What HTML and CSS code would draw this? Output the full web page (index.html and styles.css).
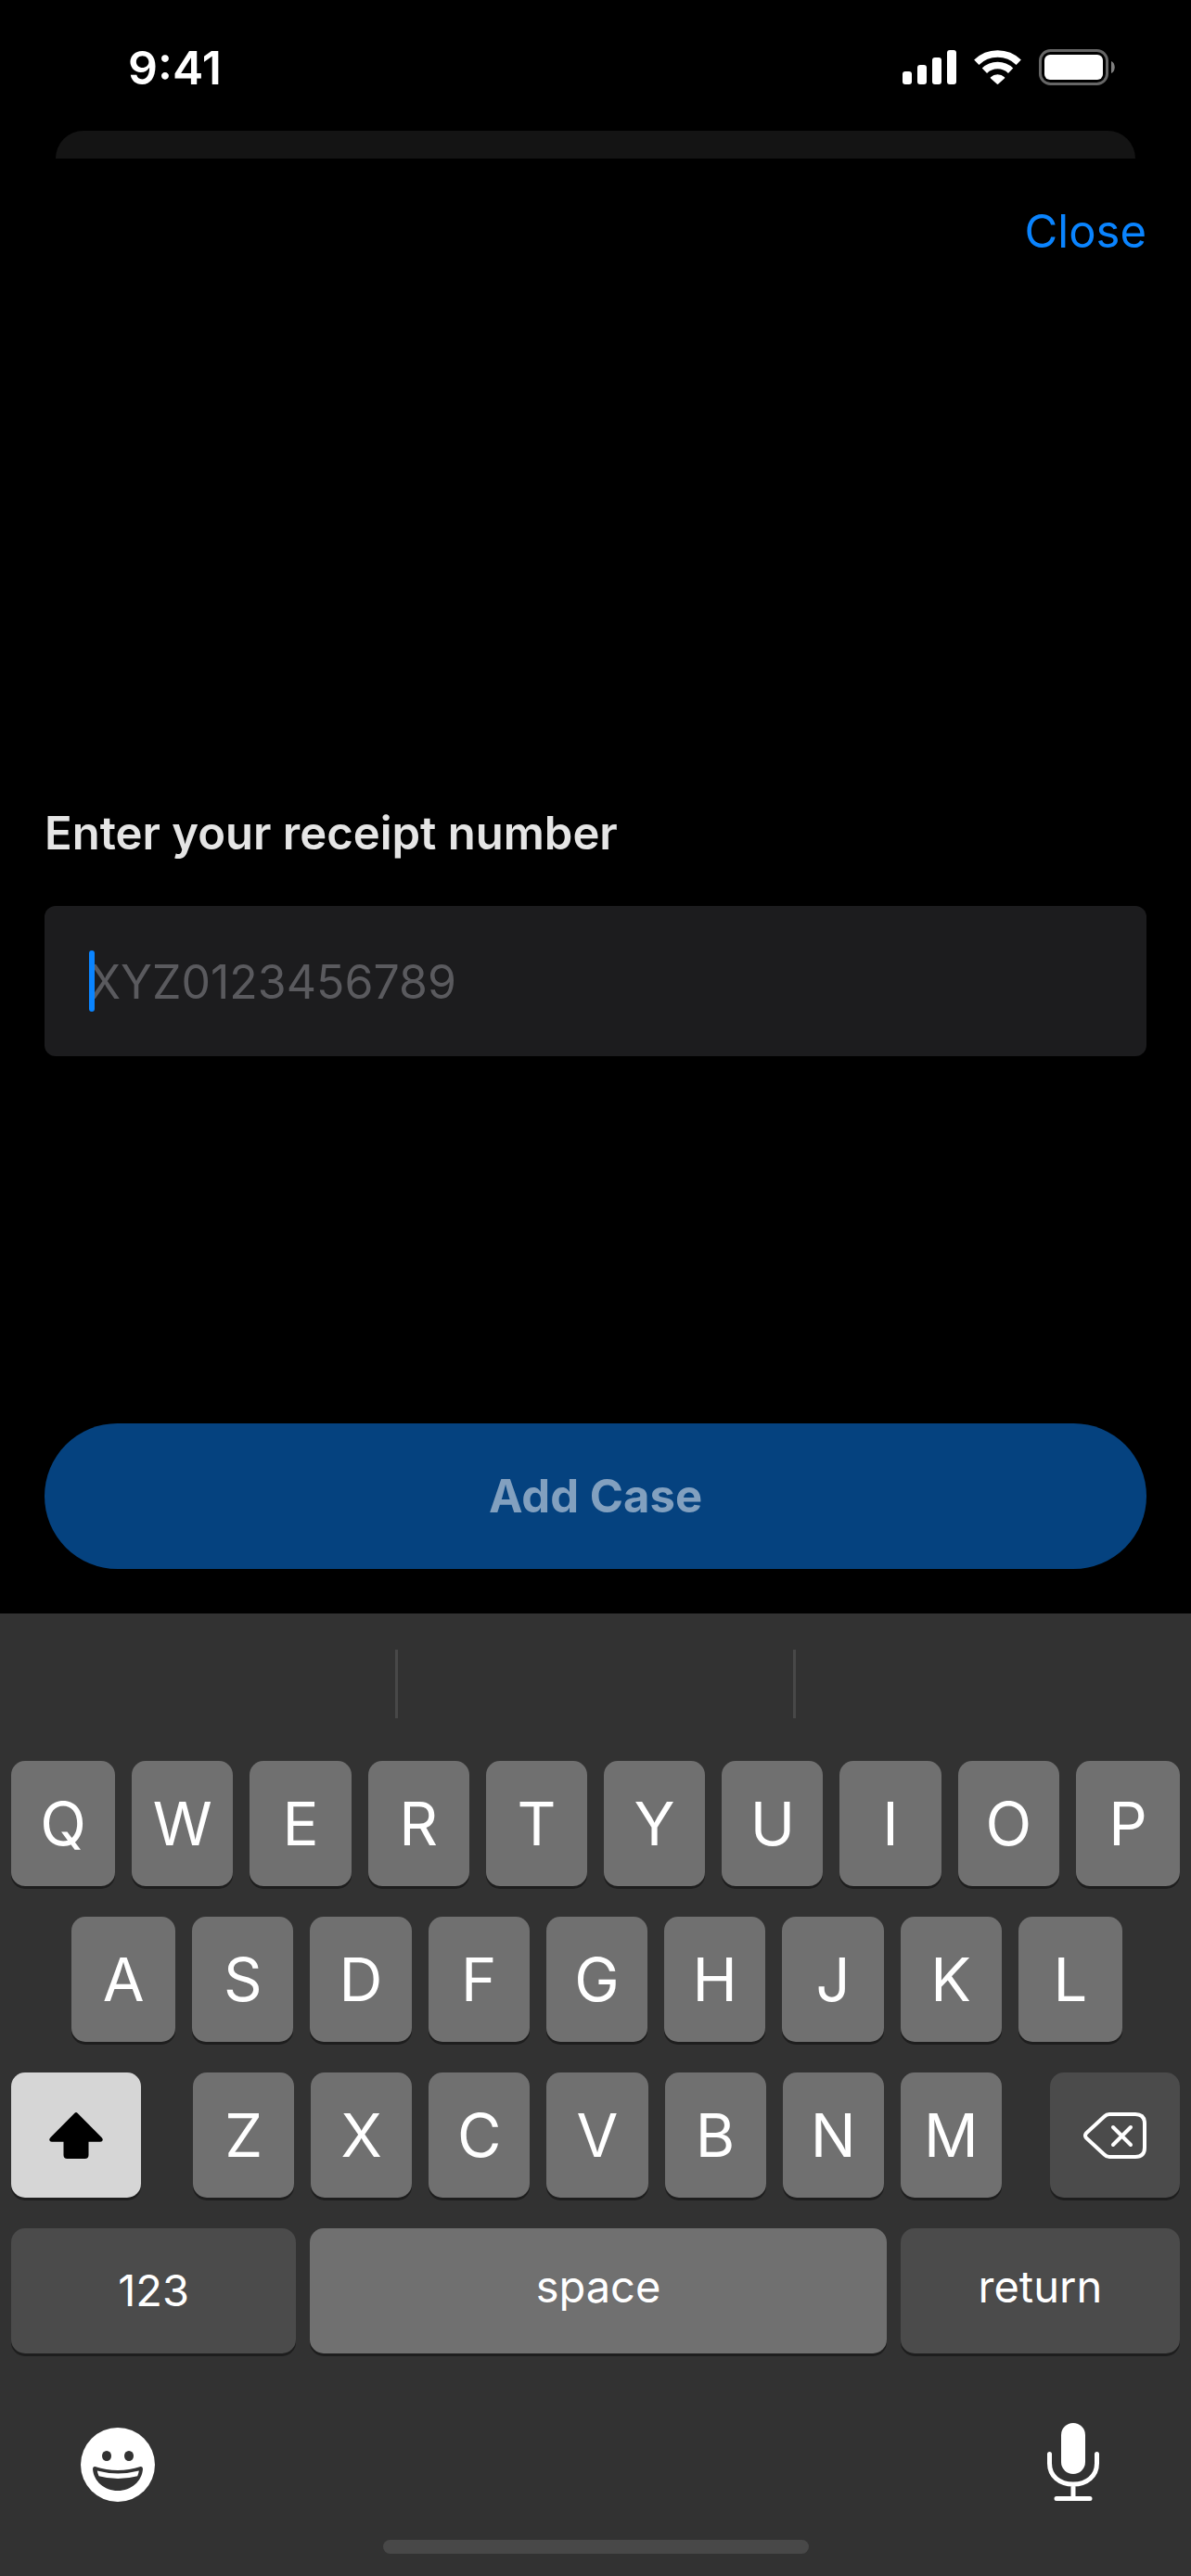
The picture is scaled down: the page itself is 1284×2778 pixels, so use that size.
FILE: index.html
```html
<!DOCTYPE html>
<html lang="en">
<head>
<meta charset="utf-8">
<meta name="viewport" content="width=device-width, initial-scale=1">
<title>Add Case</title>
<link rel="stylesheet" href="styles.css">
</head>
<body>
<header class="status-bar">
  <time class="status-time">9:41</time>
  <div class="status-icons">
    <svg class="signal" width="58" height="37" viewBox="0 0 58 37" fill="#fff" role="img" aria-label="Signal">
      <rect x="0" y="23" width="10" height="14" rx="3"/>
      <rect x="16" y="16" width="10" height="21" rx="3"/>
      <rect x="32" y="8" width="10" height="29" rx="3"/>
      <rect x="48" y="0" width="10" height="37" rx="3"/>
    </svg>
    <svg class="wifi" width="51" height="37" viewBox="0 0 51 37" role="img" aria-label="Wi-Fi">
      <g fill="none" stroke="#fff" stroke-width="7.6">
        <path d="M2.8 13.2a32.6 32.6 0 0 1 45.4 0"/>
        <path d="M11.4 22.2a20.3 20.3 0 0 1 28.2 0"/>
      </g>
      <path d="M18 29.2a11 11 0 0 1 15 0q.5.6 0 1.200l-6.700 6.200q-.8.7-1.600 0L18 30.400q-.5-.6 0-1.200z" fill="#fff"/>
    </svg>
    <svg class="battery" width="82" height="39" viewBox="0 0 82 39" role="img" aria-label="Battery">
      <rect x="1.500" y="1.500" width="72" height="36" rx="11" fill="none" stroke="#666" stroke-width="3"/>
      <rect x="6" y="6" width="63" height="27" rx="6" fill="#fff"/>
      <path d="M78 13c5 2 5 11 0 13z" fill="#808080"/>
    </svg>
  </div>
</header>
<div class="back-card"></div>
<main class="sheet">
  <nav class="sheet-nav"><button class="close" type="button">Close</button></nav>
  <form class="case-form">
    <label class="field-label" for="receipt">Enter your receipt number</label>
    <div class="field">
      <input class="field-input" id="receipt" type="text" placeholder="XYZ0123456789">
      <span class="caret"></span>
    </div>
    <button class="submit" type="submit" disabled>Add Case</button>
  </form>
</main>
<section class="keyboard" aria-label="Keyboard">
  <div class="suggestions"><span></span><span></span><span></span></div>
  <div class="rows">
    <div class="row">
      <button class="key edge">Q</button><button class="key">W</button><button class="key">E</button><button class="key">R</button><button class="key">T</button><button class="key">Y</button><button class="key">U</button><button class="key">I</button><button class="key">O</button><button class="key edge">P</button>
    </div>
    <div class="row home-row">
      <button class="key edge">A</button><button class="key">S</button><button class="key">D</button><button class="key">F</button><button class="key">G</button><button class="key">H</button><button class="key">J</button><button class="key">K</button><button class="key edge">L</button>
    </div>
    <div class="shift-row">
      <button class="key shift" aria-label="Shift">
        <svg width="58" height="50" viewBox="0 0 58 50"><path d="M27.500.8q1.500-1.400 3 0L56.500 27q1.500 1.600 1.200 3-.3 1.700-2.500 1.700H42.500V46q0 4-4 4h-19q-4 0-4-4V31.700H2.800Q.6 31.700.3 30 0 28.600 1.500 27z" fill="#000"/></svg>
      </button>
      <div class="row">
        <button class="key">Z</button><button class="key">X</button><button class="key">C</button><button class="key">V</button><button class="key">B</button><button class="key">N</button><button class="key">M</button>
      </div>
      <button class="key dark" aria-label="Delete">
        <svg width="68" height="50" viewBox="0 0 68 50" fill="none" stroke="#fff" stroke-width="4" stroke-linecap="round" stroke-linejoin="round"><path d="M28 2h28q10 0 10 10v26q0 10-10 10H28q-3 0-5.500-2.500L3 27.500q-2-2.500 0-5L22.500 4.500Q25 2 28 2z"/><path d="M32 16l19 19M51 16L32 35"/></svg>
      </button>
    </div>
    <div class="bottom-row">
      <button class="key dark numbers">123</button>
      <button class="key word">space</button>
      <button class="key dark word">return</button>
    </div>
  </div>
  <div class="tools">
    <button class="tool" aria-label="Emoji">
      <svg width="80" height="80" viewBox="0 0 80 80"><circle cx="40" cy="40" r="40" fill="#fff"/><g fill="#323232"><ellipse cx="28" cy="30.500" rx="5" ry="5.600"/><ellipse cx="52" cy="30.500" rx="5" ry="5.600"/><path d="M15.500 42Q40 50 64.500 42q2.500-.4 2.500 2.500C66 58 54.500 68 40 68S14 58 13 44.500q0-2.900 2.500-2.500z"/></g><path d="M17.800 46.600Q40 52.500 62.800 46.600q-.3 3-1.600 5.600-21.200 5.600-41.600 0-1.400-2.600-1.800-5.600z" fill="#fff"/></svg>
    </button>
    <button class="tool" aria-label="Dictate">
      <svg width="56" height="84" viewBox="0 0 56 84"><rect x="15" y="0" width="26" height="55" rx="13" fill="#fff"/><path d="M2.500 33.500v10C2.500 57 13 66 28 66s25.500-9 25.500-22.500v-10M28 66v15M10 81.500h36" fill="none" stroke="#fff" stroke-width="5" stroke-linecap="round"/></svg>
    </button>
  </div>
  <div class="home-indicator"></div>
</section>
</body>
</html>
```
FILE: styles.css
```css
* { box-sizing: border-box; }

body {
  margin: 0;
  min-height: 100vh;
  display: flex;
  flex-direction: column;
  background: #000;
  color: #fff;
  font-family: Inter, "Liberation Sans", sans-serif;
}

button {
  margin: 0;
  padding: 0;
  border: 0;
  background: none;
  color: inherit;
  font: inherit;
}

svg { display: block; }

.status-bar {
  display: flex;
  justify-content: space-between;
  align-items: center;
  height: 141px;
  padding: 4px 82px 0 138px;
}
.status-time { font-size: 50px; font-weight: 600; line-height: 60px; }
.status-icons { display: flex; align-items: center; }
.wifi { margin: 0 19px; }

.back-card {
  height: 30px;
  margin: 0 60px;
  border-radius: 30px 30px 0 0;
  background: #141414;
}

.sheet {
  flex: 1;
  display: flex;
  flex-direction: column;
  padding: 49px 48px 48px;
}
.sheet-nav { display: flex; justify-content: flex-end; }
.close { color: #0a84ff; font-size: 49px; line-height: 60px; }

.case-form {
  flex: 1;
  display: flex;
  flex-direction: column;
  padding-top: 589px;
}
.field-label { color: #e5e5e5; font-size: 49px; font-weight: 600; line-height: 60px; }
.field { position: relative; margin-top: 48px; }
.field-input {
  display: block;
  width: 100%;
  height: 162px;
  padding: 2px 48px 0;
  border: 0;
  border-radius: 12px;
  outline: 0;
  background: #1c1c1e;
  color: #fff;
  font: inherit;
  font-size: 50px;
}
.field-input::placeholder { color: #5a5a5e; opacity: 1; }
.caret {
  position: absolute;
  left: 48px;
  top: 48px;
  width: 6px;
  height: 66px;
  border-radius: 3px;
  background: #0a84ff;
}
.submit {
  height: 157px;
  margin-top: auto;
  border-radius: 79px;
  background: #05427f;
  color: #82a0bf;
  font-size: 49px;
  font-weight: 700;
}

.keyboard { background: #323232; }
.suggestions {
  display: flex;
  padding: 39px 0 46px;
}
.suggestions span { flex: 1; height: 74px; }
.suggestions span + span { border-left: 3px solid #484848; }

.rows {
  display: flex;
  flex-direction: column;
  gap: 33px;
  padding: 0 12px;
}
.row { display: flex; flex: 1; gap: 18px; }
.home-row { padding: 0 62px 0 65px; }
.shift-row { display: flex; }
.shift-row > .row { flex: 872; margin: 0 52px 0 56px; }
.shift-row > .key { flex: 140; }
.bottom-row { display: grid; grid-template-columns: 307fr 621fr 301fr; gap: 15px; }

.key {
  flex: 109;
  display: flex;
  justify-content: center;
  align-items: center;
  min-width: 0;
  height: 135px;
  border-radius: 15px;
  background: #707070;
  box-shadow: 0 3px 0 #1e1e1e;
  color: #fff;
  font-size: 65px;
}
.edge { flex: 112; }
.shift { background: #d6d6d6; }
.dark { background: #4b4b4b; }
.numbers, .word { font-size: 47px; }
.numbers { padding-bottom: 2px; }
.word { padding-bottom: 10px; }

.tools {
  display: flex;
  justify-content: space-between;
  align-items: flex-start;
  padding: 75px 99px 0 87px;
}
.tool:first-child { padding-top: 5px; }
.home-indicator {
  width: 459px;
  height: 15px;
  margin: 41px auto 24px;
  border-radius: 8px;
  background: #484848;
}
```
